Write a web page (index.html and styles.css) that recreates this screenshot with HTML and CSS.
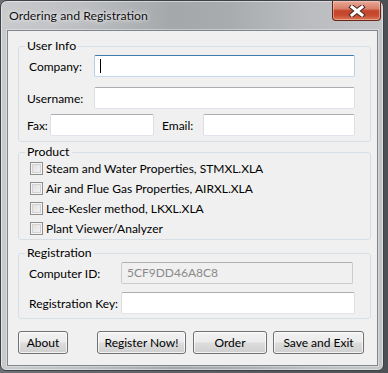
FILE: index.html
```html
<!DOCTYPE html>
<html>
<head>
<meta charset="utf-8">
<link rel="stylesheet" href="styles.css">
</head>
<body>
<div class="window">
  <div class="titlebar">
    <span class="title">Ordering and Registration</span>
    <div class="close">
      <svg width="18" height="12" viewBox="0 0 18 12">
        <path d="M4 2 L14 10 M14 2 L4 10" stroke="#4a2a24" stroke-width="5" stroke-linecap="square"/>
        <path d="M4 2 L14 10 M14 2 L4 10" stroke="#ffffff" stroke-width="3" stroke-linecap="square"/>
      </svg>
    </div>
  </div>
  <div class="client">
    <fieldset class="group g-user">
      <legend>User Info</legend>
      <div class="row r-company">
        <span class="lbl l-company">Company:</span>
        <div class="tb tb-company focused"><span class="caret"></span></div>
      </div>
      <div class="row r-username">
        <span class="lbl l-username">Username:</span>
        <div class="tb tb-username"></div>
      </div>
      <div class="row r-fax">
        <span class="lbl l-fax">Fax:</span>
        <div class="tb tb-fax"></div>
        <span class="lbl l-email">Email:</span>
        <div class="tb tb-email"></div>
      </div>
    </fieldset>
    <fieldset class="group g-product">
      <legend>Product</legend>
      <div class="checks">
        <div class="chk"><span class="box"></span><span>Steam and Water Properties, STMXL.XLA</span></div>
        <div class="chk"><span class="box"></span><span>Air and Flue Gas Properties, AIRXL.XLA</span></div>
        <div class="chk"><span class="box"></span><span>Lee-Kesler method, LKXL.XLA</span></div>
        <div class="chk"><span class="box"></span><span>Plant Viewer/Analyzer</span></div>
      </div>
    </fieldset>
    <fieldset class="group g-reg">
      <legend>Registration</legend>
      <div class="row r-cid">
        <span class="lbl l-reg">Computer ID:</span>
        <div class="tb tb-cid disabled">5CF9DD46A8C8</div>
      </div>
      <div class="row r-key">
        <span class="lbl l-reg">Registration Key:</span>
        <div class="tb tb-key"></div>
      </div>
    </fieldset>
    <div class="buttons">
      <div class="btn b-about">About</div>
      <div class="btn b-register">Register Now!</div>
      <div class="btn b-order">Order</div>
      <div class="btn b-save">Save and Exit</div>
    </div>
  </div>
</div>
</body>
</html>
```

FILE: styles.css
```css
html, body {
  margin: 0;
  padding: 0;
}
body {
  width: 388px;
  height: 373px;
  overflow: hidden;
  background: linear-gradient(90deg, #6d7074, #4d5054);
  font-family: "Lato", "Open Sans", sans-serif;
  font-size: 12px;
  color: #000;
}
.window {
  width: 384px;
  height: 371px;
  box-sizing: border-box;
  border: 1px solid #3e4247;
  border-radius: 7px 7px 6px 6px;
  background: linear-gradient(90deg, #c8cacc 0%, #bdbfc2 20%, #a5a8ab 45%, #a9acaf 60%, #babcbf 80%, #c3c5c7 100%);
  box-shadow: inset 0 0 0 1px rgba(255, 255, 255, 0.45);
  overflow: hidden;
}
.titlebar {
  height: 29px;
  display: flex;
  justify-content: space-between;
  align-items: flex-start;
}
.title {
  padding: 7px 0 0 8px;
  font-size: 12.3px;
  line-height: 16px;
  color: #111;
  text-shadow: 0 0 6px rgba(255, 255, 255, 0.9), 0 0 3px rgba(255, 255, 255, 0.7);
}
.close {
  width: 49px;
  height: 20px;
  box-sizing: border-box;
  margin-right: 2px;
  border: 1px solid #6a2418;
  border-top: none;
  border-radius: 0 0 4px 4px;
  background: linear-gradient(#e8aa9a 0%, #d9806a 40%, #c2442b 52%, #c84a30 75%, #d9785a 100%);
  box-shadow: inset 0 0 0 1px rgba(255, 220, 200, 0.45);
  display: flex;
  align-items: center;
  justify-content: center;
}
.client {
  margin-left: 6px;
  width: 371px;
  height: 336px;
  box-sizing: border-box;
  border: 1px solid #80858b;
  background: #f0f0f0;
  padding: 7px 0 0 10px;
  box-shadow: 0 0 0 1px rgba(255, 255, 255, 0.35);
}
.group {
  margin: 0;
  padding: 0;
  width: 353px;
  box-sizing: border-box;
  border: 1px solid #d5dfe5;
  border-radius: 3px;
  min-inline-size: 0;
}
.group legend {
  margin-left: 6px;
  padding: 0 2px;
  font-size: 12.3px;
  line-height: 16px;
}
.g-user {
  padding-bottom: 5px;
}
.g-product {
  margin-top: 2px;
  padding-bottom: 1px;
}
.g-reg {
  margin-top: 5px;
  padding-bottom: 4px;
}
.row {
  display: flex;
  align-items: center;
  height: 22px;
  padding-left: 8px;
}
.r-company {
  margin-top: 1px;
}
.r-username {
  margin-top: 10px;
}
.r-fax {
  margin-top: 5px;
}
.r-cid {
  margin-top: 1px;
}
.r-key {
  margin-top: 8px;
}
.lbl {
  white-space: nowrap;
}
.l-company {
  width: 65px;
  padding-left: 2px;
}
.l-username {
  width: 67px;
}
.l-fax {
  width: 23px;
}
.l-email {
  width: 41px;
  margin-left: 8px;
}
.l-reg {
  width: 92px;
  padding-left: 2px;
}
.tb {
  height: 22px;
  box-sizing: border-box;
  background: #fff;
  border: 1px solid #e2e3ea;
  border-top-color: #abadb3;
  border-left-color: #dbdfe6;
  border-right-color: #dbdfe6;
  border-radius: 2px;
  position: relative;
}
.tb-company,
.tb-username {
  width: 261px;
}
.tb-fax {
  width: 104px;
}
.tb-email {
  width: 152px;
}
.tb-cid {
  width: 232px;
}
.tb-key {
  width: 234px;
}
.focused {
  border-color: #c5daed;
  border-top-color: #3d7bad;
  border-left-color: #b5cfe7;
  border-right-color: #b5cfe7;
}
.caret {
  position: absolute;
  left: 5px;
  top: 3px;
  width: 1px;
  height: 14px;
  background: #000;
}
.disabled {
  background: #f0f0f0;
  border-color: #c9cbcf;
  border-top-color: #adb2b5;
  color: #8a8a8a;
  padding-left: 5px;
  line-height: 20px;
}
.checks {
  margin-top: -2px;
}
.chk {
  display: flex;
  align-items: center;
  height: 20px;
  padding-left: 11px;
  gap: 3px;
}
.box {
  width: 13px;
  height: 13px;
  box-sizing: border-box;
  border: 1px solid #8e8f8f;
  background: linear-gradient(135deg, #dcdcdc, #f6f6f6);
  box-shadow: inset 0 0 0 1px #f4f4f4, inset 0 0 0 2px #d2d2d2;
}
.buttons {
  display: flex;
  margin-top: 12px;
}
.btn {
  height: 23px;
  box-sizing: border-box;
  border: 1px solid #707070;
  border-radius: 3px;
  background: linear-gradient(#f2f2f2 0%, #ebebeb 48%, #dddddd 52%, #cfcfcf 100%);
  box-shadow: inset 0 0 0 1px rgba(255, 255, 255, 0.75);
  display: flex;
  align-items: center;
  justify-content: center;
  line-height: 16px;
}
.b-about {
  width: 50px;
}
.b-register {
  width: 89px;
  margin-left: 29px;
}
.b-order {
  width: 74px;
  margin-left: 7px;
}
.b-save {
  width: 91px;
  margin-left: 6px;
}
```
